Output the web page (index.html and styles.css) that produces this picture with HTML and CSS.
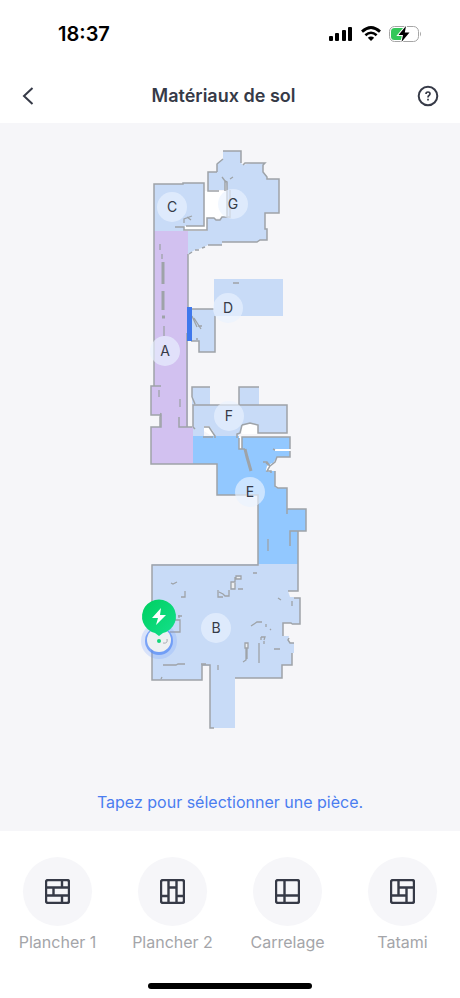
FILE: index.html
```
<!DOCTYPE html>
<html lang="fr">

<head>
    <meta charset="UTF-8">
    <meta name="viewport" content="width=device-width, initial-scale=1.0">
    <title>Matériaux de sol</title>
    <link rel="stylesheet" href="styles.css">
</head>

<body>
    <div class="status-bar">
        <span class="time">18:37</span>
        <div class="status-icons">
            <svg width="24" height="16" viewBox="0 0 24 16">
                <rect x="0" y="10" width="4" height="5" rx="1" />
                <rect x="6" y="7" width="4" height="8" rx="1" />
                <rect x="13" y="4" width="4" height="11" rx="1" />
                <rect x="19" y="1" width="4" height="14" rx="1" />
            </svg>
            <svg width="20" height="16" viewBox="0 0 20 16">
                <path d="M1 5.6 Q10 -2.6 19 5.6" fill="none" stroke="#000" stroke-width="2.8" />
                <path d="M4.4 9.3 Q10 4.2 15.6 9.3" fill="none" stroke="#000" stroke-width="2.6" />
                <path d="M6.8 11.8 Q10 9 13.2 11.8 L10 15 Z" />
            </svg>
            <svg width="33" height="16" viewBox="0 0 33 16">
                <rect x="0.5" y="0.5" width="29" height="15" rx="5" fill="none" stroke="#a5a5a5" />
                <path d="M5.5 2H14V14H5.5Q2 14 2 10.5V5.5Q2 2 5.5 2Z" fill="#34c759" />
                <path d="M31 5.5Q33 8 31 10.5Z" fill="#a5a5a5" />
                <path d="M17 0L9.5 9H14L12.5 16L20.5 6.5H15.8Z" stroke="#fff" stroke-width="2" paint-order="stroke" />
            </svg>
        </div>
    </div>

    <header>
        <button class="icon-btn" aria-label="Retour">
            <svg width="24" height="24" viewBox="0 0 24 24">
                <path d="M16.5 4L8 12L16.5 20" />
            </svg>
        </button>
        <h1>Matériaux de sol</h1>
        <button class="icon-btn" aria-label="Aide">
            <svg width="24" height="24" viewBox="0 0 24 24">
                <circle cx="12" cy="12" r="9.3" />
                <path d="M10 10Q10 8 12 8Q14 8 14 9.8Q14 10.8 13 11.4Q12 12 12 13.4M12 14.8V16.4" stroke-width="1.7" />
            </svg>
        </button>
    </header>

    <main>
        <svg class="map" viewBox="0 123 460 660">
            <defs>
                <linearGradient id="pin" x1="0" y1="0" x2="1" y2="1">
                    <stop offset="0" stop-color="#00cf60" />
                    <stop offset="1" stop-color="#14e08c" />
                </linearGradient>
            </defs>

            <!-- Gaps between rooms -->
            <path d="M205 191H229V218H207V230H184V226H205Z" fill="#fff" />

            <!-- Rooms -->
            <g class="room">
                <path d="M154 184H183V183H204V226H184V231H154Z" />
                <path d="M223 151H241V163L243 165L251 163H265L263 167V172L267 176V179H279V213H265V229H267V240H260L257 242H222V245H208L202 248L195 250L188 254V231H207V218H214L216 220H220L222 217H227V187L225 180V190H208V172H217V163L223 159Z" />
                <path d="M214 279H283V316H214Z" />
                <path d="M191 309H215V352H199V341H191Z" />
                <path d="M192 387H210V405H192Z" />
                <path d="M239 387H259V405H239Z" />
                <path d="M193 405H287V433H258V425L250 423L242 425L240 434L237 436H215L213 431L209 426H204V436H193Z" />
                <path d="M152 564H298V591H288L290 597H294V598H300V624H292V623H283V636H289L288 640L290 643H294V653H292V665H282V678H235V728H210V666H202V680H152Z" />
            </g>
            <path class="room-wood" d="M154 231H188V427H193V464H151V427H161V415H151V386H154Z" />
            <path class="room-selected" d="M193 436H239V449H242V437H290V449H275V451H290V457H277L273 463L268 466L266 471H275V487L278 488H287V509H306V531H298V564H258V495H217V464H193Z" />
            <path d="M275 449H290V451H275ZM239 437H241V448H239ZM204 428H209L214 435H210L204 431ZM267 466L272 463L269 472L266 470ZM242 426L250 424L258 426V434H242Z" fill="#fff" />

            <!-- Walls -->
            <g class="wall">
                <path d="M154 386V184H183V183H204V226H186M154 386H151V415H161V427H151V464H217V495H258V565H152V680H202V665H210V728H214" />
                <path d="M161 386H154M161 413L160 417V427M175 227H184V230H207V218H214L216 220H220L222 217H230" />
                <path d="M223 151H241V163M217 172V164L223 159M243 165L245 163H265L263 165V172L267 177V179H279V213H265V229H267V240H260L257 242H222M222 245H208M205 247L202 248M199 250H195M192 252L189 254" />
                <path d="M217 172H208V191H219M225 191V181L227 182V217" />
                <path class="thin" d="M230 190V218M222 177L225 181M230 179L233 177M184 223V219L192 216M187 217L191 220" />
                <path d="M188 254V308M187 333V427H179V417M187 427H192M191 309H214M215 316V352H199V341H191M197 340V338" />
                <path class="thin" d="M192 316L197 327M194 318L201 329M198 326H202" />
                <path d="M192 397V387H210M192 397L195 404M239 405V387H259M193 427V405H287V433H258V425L250 423L242 425M193 427L195 429M204 427H209L215 436V438M203 437H213" />
                <path d="M242 425L240 433L237 434V438M239 438V449H245M242 449V437H290V449M273 449L275 450M290 451V457H277L275 462L270 466L267 462H263M266 463L270 466L267 471H271V473M275 471V486L278 488H287V514M287 509H306V531H290V546M298 531V591H288" />
                <path d="M294 598H300V624H292M292 624L291 623H283V636M289 638L288 640L290 643H294M292 653V665H282V678H235" />
                <path class="dash" d="M245 449L247 457L251 471" />
                <path class="thin" d="M160 244V250M162 254V259M164 326V336M163 346V348M159 390V397M180 399V407M268 539V551M233 283H239" />
                <path class="dash" d="M163 262V284M163 291V310M162 317H165" />
            </g>
            <path d="M187 307H192V341H187Z" fill="#3f78ec" />

            <!-- Furniture -->
            <path d="M231 582H235V588H231ZM236 577H241V579H236ZM245 643H248V648H245Z" fill="#eceef0" />
            <g class="wall thin">
                <path d="M171 583L173 584L177 582M181 597H185V591M218 590V597H220M218 597H223M219 592L223 594L225 596H229V590" />
                <path d="M235 577V582H231V589H235V583M236 576H241V579H236ZM238 589H243M253 573H257" />
                <path d="M278 598L281 600M292 601V606M251 626L257 622H262M266 624V627M270 629L271 630M261 637V640M261 637H265L264 640" />
                <path d="M245 643H248V648H245ZM246 648V660L243 662M247 648V659M259 643V663M274 649H280M264 641V644M218 665V670" />
                <path d="M163 665H176L178 664H185M201 664H206M161 679L162 677M179 618V615M178 616H182M175 620H180V632H170" />
            </g>

            <!-- Room names -->
            <g class="label">
                <circle cx="172" cy="207" r="15" /><text x="172" y="212">C</text>
                <circle cx="233" cy="204" r="15" /><text x="233" y="209">G</text>
                <circle cx="228" cy="308" r="15" /><text x="228" y="313">D</text>
                <circle cx="165" cy="351" r="15" /><text x="165" y="356">A</text>
                <circle cx="229" cy="416" r="15" /><text x="229" y="421">F</text>
                <circle cx="250" cy="492" r="15" /><text x="250" y="497">E</text>
                <circle cx="216" cy="628" r="15" /><text x="216" y="633">B</text>
            </g>

            <!-- Robot on its dock -->
            <circle cx="159" cy="641" r="18" fill="#6c9dff" opacity="0.22" />
            <circle cx="159" cy="641" r="14" fill="#5b8df5" opacity="0.75" />
            <circle cx="159" cy="640" r="12" fill="#eef0f2" />
            <path d="M163 643Q168 644 167 639" fill="none" stroke="#aaaeb4" />
            <circle cx="159" cy="641" r="2" fill="#12d57a" />
            <path d="M159 636L155 633A17 17 0 1 1 163 633Z" fill="url(#pin)" />
            <path d="M161 608L152 618H158L156 625L166 615H160Z" fill="#fff" />
        </svg>
        <p class="hint">Tapez pour sélectionner une pièce.</p>
    </main>

    <footer>
        <div class="materials">
            <button class="material">
                <span class="circle">
                    <svg width="25" height="25" viewBox="0 0 25 25">
                        <rect x="1" y="1" width="23" height="23" rx="2" />
                        <path d="M1 8.5H24M1 16.5H24M17 1V8.5M8.5 8.5V16.5M17 16.5V24" />
                    </svg>
                </span>
                Plancher 1
            </button>
            <button class="material">
                <span class="circle">
                    <svg width="25" height="25" viewBox="0 0 25 25">
                        <rect x="1" y="1" width="23" height="23" rx="2" />
                        <path d="M8.5 1V24M16.5 1V24M1 17H8.5M8.5 8.5H16.5M16.5 17H24" />
                    </svg>
                </span>
                Plancher 2
            </button>
            <button class="material">
                <span class="circle">
                    <svg width="25" height="25" viewBox="0 0 25 25">
                        <rect x="1" y="1" width="23" height="23" rx="2" />
                        <path d="M9.5 1V24M1 16.5H24" />
                    </svg>
                </span>
                Carrelage
            </button>
            <button class="material">
                <span class="circle">
                    <svg width="25" height="25" viewBox="0 0 25 25">
                        <rect x="1" y="1" width="23" height="23" rx="2" />
                        <path d="M8.5 1V16.5M8.5 8.5H24M16.5 8.5V24M1 16.5H16.5" />
                    </svg>
                </span>
                Tatami
            </button>
        </div>
        <div class="home-bar"></div>
    </footer>
</body>

</html>
```
FILE: styles.css
```
body {
    font-family: Inter, 'Liberation Sans', sans-serif;
    background-color: #fff;
    color: #363a47;
    margin: 0;
    min-height: 100vh;
    display: flex;
    flex-direction: column;
}

button {
    font-family: inherit;
    background: none;
    border: none;
    padding: 0;
    cursor: pointer;
}

.status-bar {
    display: flex;
    justify-content: space-between;
    align-items: center;
    height: 68px;
    padding: 0 38px 0 58px;
}

.time {
    color: #000;
    font-size: 20px;
    font-weight: 600;
}

.status-icons {
    display: flex;
    align-items: center;
    gap: 8px;
}

header {
    display: flex;
    align-items: center;
    height: 55px;
    padding: 0 20px 0 16px;
}

h1 {
    flex: 1;
    font-size: 18px;
    font-weight: 600;
    text-align: center;
    margin: 0;
    padding-right: 9px;
}

.icon-btn {
    display: flex;
}

.icon-btn svg {
    fill: none;
    stroke: #363a47;
    stroke-width: 2;
}

main {
    flex: 1;
    background-color: #f6f6f9;
}

.map {
    display: block;
    width: 100%;
}

.room {
    fill: #c8dbf7;
}

.room-wood {
    fill: #d2c1f0;
}

.room-selected {
    fill: #92c8ff;
}

.wall {
    fill: none;
    stroke: #9ea3a8;
    stroke-width: 1.5;
}

.thin {
    stroke-width: 1.3;
}

.dash {
    stroke-width: 3;
}

.label circle {
    fill: #eaf2ff;
    fill-opacity: 0.65;
}

.label text {
    fill: #363a47;
    font-size: 14px;
    text-anchor: middle;
}

.hint {
    color: #4a7df0;
    font-size: 16px;
    line-height: 20px;
    text-align: center;
    margin: 0;
    padding: 9px 0 19px;
}

footer {
    padding: 26px 0 10px;
}

.materials {
    display: grid;
    grid-template-columns: repeat(4, 1fr);
}

.material {
    display: flex;
    flex-direction: column;
    align-items: center;
    gap: 6px;
    color: #a4a5a9;
    font-size: 16px;
    line-height: 20px;
}

.circle {
    display: flex;
    align-items: center;
    justify-content: center;
    width: 69px;
    height: 69px;
    border-radius: 50%;
    background-color: #f6f6f9;
}

.circle svg {
    fill: none;
    stroke: #363a47;
    stroke-width: 2.4;
}

.home-bar {
    width: 164px;
    height: 6px;
    margin: 31px auto 0;
    border-radius: 3px;
    background-color: #000;
}
```
